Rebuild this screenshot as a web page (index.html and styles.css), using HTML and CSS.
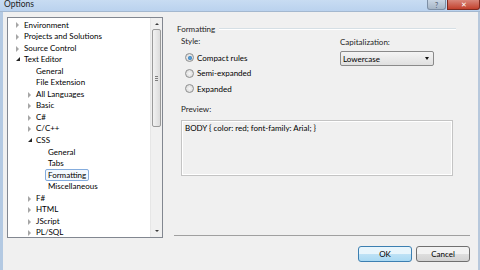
FILE: index.html
```html
<!DOCTYPE html>
<html lang="en">
<head>
  <meta charset="UTF-8" />
  <title>Options</title>
  <link rel="stylesheet" href="styles.css">
</head>
<body>
  <div class="window">
    <!-- Title bar -->
    <div class="titlebar">
      <span class="title">Options</span>
      <div class="caption-buttons">
        <span class="cap-btn help">?</span>
        <span class="cap-btn close">&#x2715;</span>
      </div>
    </div>

    <div class="client">
      <!-- Category tree -->
      <div class="tree">
        <ul class="tree-list">
          <li class="node lvl0 closed">Environment</li>
          <li class="node lvl0 closed">Projects and Solutions</li>
          <li class="node lvl0 closed">Source Control</li>
          <li class="node lvl0 open">Text Editor</li>
          <li class="node lvl1 leaf">General</li>
          <li class="node lvl1 leaf">File Extension</li>
          <li class="node lvl1 closed">All Languages</li>
          <li class="node lvl1 closed">Basic</li>
          <li class="node lvl1 closed">C#</li>
          <li class="node lvl1 closed">C/C++</li>
          <li class="node lvl1 open">CSS</li>
          <li class="node lvl2 leaf">General</li>
          <li class="node lvl2 leaf">Tabs</li>
          <li class="node lvl2 leaf"><span class="selected">Formatting</span></li>
          <li class="node lvl2 leaf">Miscellaneous</li>
          <li class="node lvl1 closed">F#</li>
          <li class="node lvl1 closed">HTML</li>
          <li class="node lvl1 closed">JScript</li>
          <li class="node lvl1 closed">PL/SQL</li>
        </ul>
        <div class="scrollbar">
          <span class="arrow up"></span>
          <div class="track">
            <div class="thumb"><span class="grip"></span></div>
          </div>
          <span class="arrow down"></span>
        </div>
      </div>

      <!-- Settings page -->
      <div class="page">
        <div class="group-head">
          <span>Formatting</span>
          <span class="group-line"></span>
        </div>

        <div class="options">
          <div class="style-col">
            <div class="label">Style:</div>
            <label class="radio"><span class="dot checked"></span>Compact rules</label>
            <label class="radio"><span class="dot"></span>Semi-expanded</label>
            <label class="radio"><span class="dot"></span>Expanded</label>
          </div>
          <div class="cap-col">
            <div class="label">Capitalization:</div>
            <div class="select">
              <span>Lowercase</span>
              <span class="caret"></span>
            </div>
          </div>
        </div>

        <div class="label preview-label">Preview:</div>
        <div class="preview">BODY { color: red; font-family: Arial; }</div>

        <div class="footer">
          <button class="btn default">OK</button>
          <button class="btn">Cancel</button>
        </div>
      </div>
    </div>
  </div>
</body>
</html>
```

FILE: styles.css
```css
body {
  margin: 0;
  width: 480px;
  height: 270px;
  overflow: hidden;
  font-family: Lato, "Open Sans", sans-serif;
  font-size: 8px;
  color: #000;
}
.window {
  width: 480px;
  height: 270px;
  box-sizing: border-box;
  background: #f0f0f0;
  border-left: 3px solid #b3c9e2;
  border-right: 2px solid #b7c8dc;
  display: flex;
  flex-direction: column;
}
.titlebar {
  height: 11px;
  margin-left: -3px;
  margin-right: -2px;
  background: linear-gradient(#c8dcf2, #bad2ee);
  border-bottom: 1px solid #a4b8cf;
  display: flex;
  justify-content: space-between;
  align-items: flex-start;
}
.title {
  padding-left: 4px;
  font-size: 8.5px;
  line-height: 9px;
  color: #1e1e1e;
}
.caption-buttons {
  display: flex;
  gap: 1px;
}
.cap-btn {
  height: 9px;
  display: flex;
  align-items: center;
  justify-content: center;
  font-size: 7px;
  border-radius: 0 0 3px 3px;
}
.help {
  width: 17px;
  background: linear-gradient(#c9d6e4, #a6b5c6);
  border: 1px solid #7d8fa5;
  border-top: none;
  color: #4b5a6c;
}
.close {
  width: 31px;
  background: linear-gradient(#d9867a, #c2412d);
  border: 1px solid #7e2a20;
  border-top: none;
  color: #fff;
  border-radius: 0 0 3px 0;
}
.client {
  flex: 1;
  display: flex;
  padding: 5px 0 0 4px;
}

/* tree view */
.tree {
  width: 154px;
  height: 219px;
  border: 1px solid #828790;
  background: #fff;
  display: flex;
}
.tree-list {
  flex: 1;
  list-style: none;
  margin: 0;
  padding: 1.5px 0 0;
}
.node {
  height: 11.55px;
  line-height: 11.55px;
  white-space: nowrap;
}
.lvl0 { padding-left: 8px; }
.lvl1 { padding-left: 20px; }
.lvl2 { padding-left: 32px; }
.node::before {
  content: "";
  display: inline-block;
  width: 8px;
  vertical-align: middle;
}
.closed::before {
  width: 0;
  height: 0;
  margin-right: 5px;
  border-left: 3px solid #a6a6a6;
  border-top: 3px solid transparent;
  border-bottom: 3px solid transparent;
}
.open::before {
  width: 0;
  height: 0;
  margin-right: 4px;
  border-right: 4px solid #262626;
  border-top: 4px solid transparent;
  position: relative;
  top: -1px;
}
.selected {
  border: 1px solid #84acdd;
  border-radius: 2px;
  background: #f4f9fe;
  padding: 0 2px;
  margin-left: -3px;
}
.scrollbar {
  width: 11px;
  background: #f0f0f0;
  border-left: 1px solid #e6e6e6;
  display: flex;
  flex-direction: column;
  align-items: center;
}
.arrow {
  width: 0;
  height: 0;
  margin: 5px 0 4px;
  border-left: 2px solid transparent;
  border-right: 2px solid transparent;
}
.up { border-bottom: 2px solid #3c3c3c; }
.down { border-top: 2px solid #3c3c3c; margin: 4px 0 5px; }
.track {
  flex: 1;
  width: 100%;
}
.thumb {
  margin: 0 1px;
  height: 96px;
  border: 1px solid #9a9a9a;
  border-radius: 2px;
  background: linear-gradient(90deg, #f2f2f2, #dcdcdc);
  display: flex;
  align-items: center;
  justify-content: center;
}
.grip {
  width: 3px;
  height: 5px;
  background: repeating-linear-gradient(#7e7e7e 0 1px, transparent 1px 2px);
}

/* settings page */
.page {
  flex: 1;
  display: flex;
  flex-direction: column;
  padding: 6px 8px 0 11px;
}
.group-head {
  display: flex;
  align-items: center;
  gap: 4px;
  color: #1e1e1e;
  line-height: 12px;
  padding-left: 3px;
}
.group-line {
  flex: 1;
  margin-right: 14px;
  border-top: 1px solid #d5dfe5;
  border-bottom: 1px solid #fff;
}
.options {
  display: flex;
  padding-left: 7px;
}
.style-col {
  width: 159px;
  display: flex;
  flex-direction: column;
}
.label {
  line-height: 12px;
  color: #1e1e1e;
}
.radio {
  display: flex;
  align-items: center;
  height: 15.5px;
  padding-left: 4px;
  gap: 3px;
}
.style-col .label + .radio { margin-top: 3px; }
.dot {
  width: 7px;
  height: 7px;
  border: 1px solid #8e8f8f;
  border-radius: 50%;
  background: radial-gradient(#f6f6f6, #d4d4d4);
  display: flex;
  align-items: center;
  justify-content: center;
}
.dot.checked::after {
  content: "";
  width: 4px;
  height: 4px;
  border-radius: 50%;
  background: radial-gradient(#60b4ec, #1d5a9a);
}
.cap-col {
  display: flex;
  flex-direction: column;
}
.cap-col .label { margin-top: 1px; }
.select {
  margin-top: 3px;
  width: 94px;
  height: 15px;
  box-sizing: border-box;
  border: 1px solid #8a8a8a;
  border-radius: 2px;
  background: linear-gradient(#f4f4f4, #e0e0e0);
  display: flex;
  align-items: center;
  justify-content: space-between;
  padding: 0 4px 0 2px;
}
.caret {
  border-left: 2.5px solid transparent;
  border-right: 2.5px solid transparent;
  border-top: 3px solid #111;
}
.preview-label {
  margin-top: 6px;
  padding-left: 7px;
}
.preview {
  margin: 5px 0 0 7px;
  width: 272px;
  height: 56px;
  box-sizing: border-box;
  border: 1px solid #c4c4c4;
  box-shadow: inset 0 0 0 1px #fff;
  padding: 1px 3px;
  line-height: 12px;
}
.footer {
  margin-top: auto;
  border-top: 1px solid #a0a0a0;
  box-shadow: 0 1px 0 #fff;
  display: flex;
  justify-content: flex-end;
  gap: 4px;
  padding: 10px 0 8px;
}
.btn {
  width: 54px;
  height: 16px;
  font-family: inherit;
  font-size: 8px;
  border: 1px solid #707070;
  border-radius: 3px;
  background: linear-gradient(#f2f2f2 50%, #dedede 50%, #d2d2d2);
  padding: 0;
}
.btn.default {
  border-color: #3c7fb1;
  background: linear-gradient(#e8f5fc 50%, #bfe2f6 50%, #a9d9f3);
}
```
